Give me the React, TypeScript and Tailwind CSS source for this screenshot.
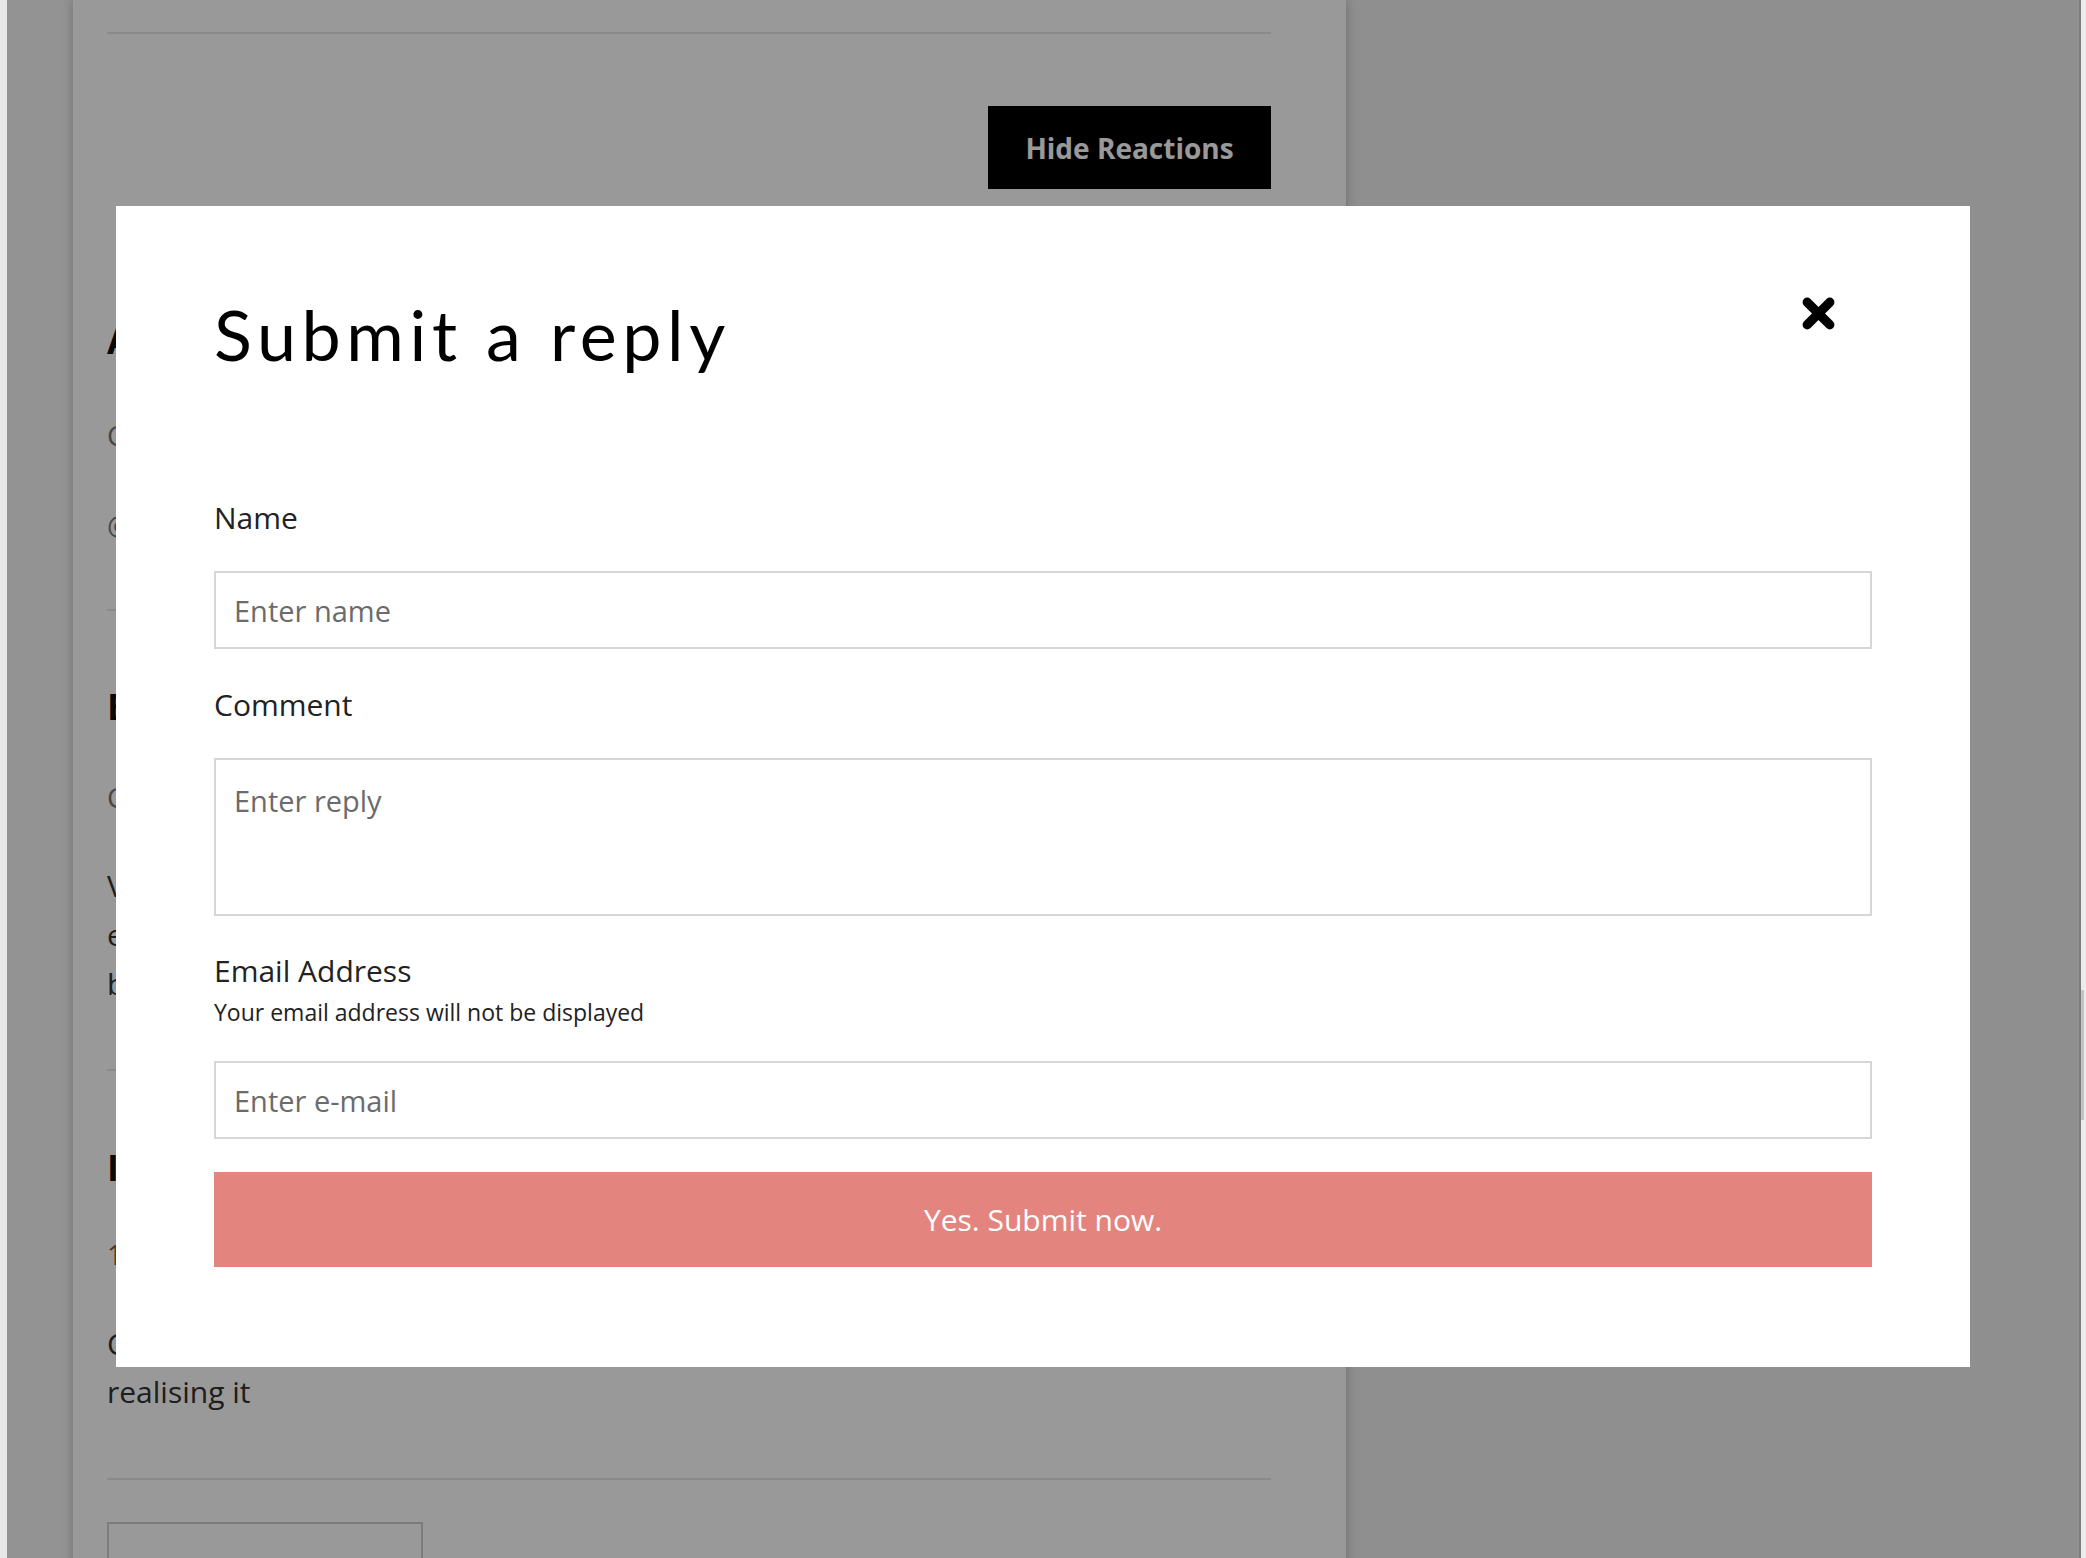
const sans = "font-['Open_Sans','Noto_Sans',sans-serif]";

const CloseIcon = () => (
  <svg viewBox="0 0 36 36" className="h-[37px] w-[37px]" aria-hidden="true">
    <path d="M7 7 L29 29 M29 7 L7 29" stroke="#000" strokeWidth="9" strokeLinecap="round" />
  </svg>
);

const BackgroundPage = () => (
  <div className="flex min-h-[1558px] bg-[#eeeeee]">
    <div className="w-[7px] shrink-0" />
    <div className="w-[66px] shrink-0 bg-[#f5f5f5]" />
    <div
      className={`relative flex w-[1273px] shrink-0 flex-col bg-white pl-[34px] pr-[75px] text-[#333] shadow-[0_0_10px_rgba(0,0,0,0.25)] ${sans}`}
    >
      <div className="mt-[32px] h-[2px] bg-[#e6e6e6]" />
      <div className="mt-[72px] flex justify-end">
        <button className="h-[83px] w-[283px] bg-black text-[28px] font-bold text-white">Hide Reactions</button>
      </div>
      <h3 className="mt-[130px] text-[36px] font-bold leading-[44px] text-[#111]">About</h3>
      <p className="mt-[54px] text-[28px] leading-[36px] text-[#777]">Clara</p>
      <p className="mt-[54px] text-[28px] leading-[36px] text-[#777]">@clara</p>
      <div className="mt-[66px] h-[2px] bg-[#e6e6e6]" />
      <h3 className="mt-[74px] text-[36px] font-bold leading-[44px] text-[#111]">Emma</h3>
      <p className="mt-[50px] text-[28px] leading-[36px] text-[#777]">Commented</p>
      <p className="mt-[46px] text-[30px] leading-[49px]">
        Very
        <br />
        even
        <br />
        but
      </p>
      <div className="mt-[61px] h-[2px] bg-[#e6e6e6]" />
      <h3 className="mt-[75px] text-[36px] font-bold leading-[44px] text-[#111]">Isaac</h3>
      <p className="mt-[46px] text-[28px] leading-[36px] text-[#8a5a3c]">12</p>
      <p className="mt-[48px] text-[30px] leading-[48px]">
        Can't
        <br />
        realising it
      </p>
      <div className="mt-[62px] h-[2px] bg-[#e6e6e6]" />
      <div className="mt-[42px] h-[60px] w-[316px] border-2 border-[#cfcfcf]" />
    </div>
  </div>
);

const Field = ({ placeholder }: { placeholder: string }) => (
  <input
    type="text"
    placeholder={placeholder}
    className={`h-[78px] w-full border-2 border-[#d6d6d6] bg-white px-[18px] text-[29px] text-[#333] outline-none placeholder:text-[#6b6b6b] ${sans}`}
  />
);

const App = () => {
  return (
    <div className="relative h-[1558px] w-[2086px] overflow-hidden">
      <BackgroundPage />
      <div className="fixed inset-0 bg-black/40" />
      <div className="fixed left-0 top-0 h-full w-[7px] bg-[#e8e8e8]" />
      <div className="fixed right-0 top-0 flex h-full w-[7px]">
        <div className="w-[2px] bg-[#7c7c7c]" />
        <div className="flex-1 bg-[#ececec] pt-[990px]">
          <div className="h-[130px] w-[3px] bg-[#c4c4c4]" />
        </div>
      </div>

      <div
        role="dialog"
        className={`absolute left-[116px] top-[206px] w-[1854px] bg-white px-[98px] pb-[100px] pt-[93px] ${sans}`}
      >
        <button className="absolute right-[133px] top-[89px]" aria-label="Close">
          <CloseIcon />
        </button>

        <h2 className="font-['Lato','Open_Sans',sans-serif] text-[70px] leading-none tracking-[0.08em] text-black">
          Submit a reply
        </h2>

        <form className="mt-[129px] flex flex-col">
          <label className="text-[30px] leading-[40px] text-[#222]">Name</label>
          <div className="mt-[33px]">
            <Field placeholder="Enter name" />
          </div>

          <label className="mt-[36px] text-[30px] leading-[40px] text-[#222]">Comment</label>
          <textarea
            placeholder="Enter reply"
            className={`mt-[33px] h-[158px] w-full resize-none border-2 border-[#d6d6d6] px-[18px] pt-[21px] text-[29px] leading-[40px] text-[#333] outline-none placeholder:text-[#6b6b6b] ${sans}`}
          />

          <label className="mt-[37px] text-[30px] leading-[36px] text-[#222]">Email Address</label>
          <span className="mt-[8px] text-[23px] leading-[30px] text-[#222]">Your email address will not be displayed</span>
          <div className="mt-[34px]">
            <Field placeholder="Enter e-mail" />
          </div>

          <button
            type="submit"
            className="mt-[33px] h-[95px] w-full bg-[#e3857e] text-[30px] text-white"
          >
            Yes. Submit now.
          </button>
        </form>
      </div>
    </div>
  );
};

export default App;
